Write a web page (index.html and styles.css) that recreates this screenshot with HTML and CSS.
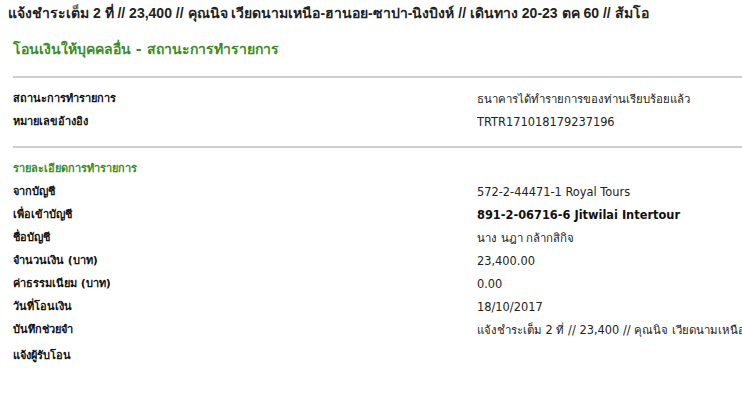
FILE: index.html
```html
<!DOCTYPE html>
<html lang="th">
<head>
<meta charset="utf-8">
<link rel="stylesheet" href="styles.css">
</head>
<body>
<h1 class="subject">แจ้งชำระเต็ม 2 ที่ // 23,400 // คุณนิจ เวียดนามเหนือ-ฮานอย-ซาปา-นิงบิงห์ // เดินทาง 20-23 ตค 60 // ส้มโอ</h1>
<div class="panel">
  <h2 class="title">โอนเงินให้บุคคลอื่น - สถานะการทำรายการ</h2>
  <div class="block">
    <div class="row"><span class="label">สถานะการทำรายการ</span><span class="value">ธนาคารได้ทำรายการของท่านเรียบร้อยแล้ว</span></div>
    <div class="row"><span class="label">หมายเลขอ้างอิง</span><span class="value">TRTR171018179237196</span></div>
  </div>
  <div class="block details">
    <div class="section">รายละเอียดการทำรายการ</div>
    <div class="row"><span class="label">จากบัญชี</span><span class="value">572-2-44471-1 Royal Tours</span></div>
    <div class="row"><span class="label">เพื่อเข้าบัญชี</span><span class="value strong">891-2-06716-6 Jitwilai Intertour</span></div>
    <div class="row"><span class="label">ชื่อบัญชี</span><span class="value">นาง นฎา กล้ากสิกิจ</span></div>
    <div class="row"><span class="label">จำนวนเงิน (บาท)</span><span class="value">23,400.00</span></div>
    <div class="row"><span class="label">ค่าธรรมเนียม (บาท)</span><span class="value">0.00</span></div>
    <div class="row"><span class="label">วันที่โอนเงิน</span><span class="value">18/10/2017</span></div>
    <div class="row"><span class="label">บันทึกช่วยจำ</span><span class="value clip">แจ้งชำระเต็ม 2 ที่ // 23,400 // คุณนิจ เวียดนามเหนือ-ฮานอย-ซาปา-นิงบิงห์ // เดินทาง 20-23 ตค 60 // ส้มโอ</span></div>
    <div class="row notify"><span class="label">แจ้งผู้รับโอน</span><span class="value"></span></div>
  </div>
</div>
</body>
</html>
```
FILE: styles.css
```css
html, body {
  margin: 0;
  padding: 0;
  background: #fff;
  overflow: hidden;
}
body {
  width: 742px;
  height: 406px;
  color: #1a1a1a;
}
.subject {
  margin: 0;
  padding: 5px 0 0 8px;
  font: bold 14px/17px "Liberation Sans", Arial, sans-serif;
  color: #222;
  white-space: nowrap;
}
.panel {
  padding: 19px 0 0 13px;
}
.title {
  margin: 0;
  font: bold 14px/17px Tahoma, "DejaVu Sans", sans-serif;
  color: #3a8e1e;
}
.block {
  margin-top: 18px;
  border-top: 2px solid #cfcfcf;
  padding-top: 9px;
  padding-bottom: 1px;
}
.details {
  margin-top: 12px;
  padding-top: 13px;
}
.section {
  font: bold 11px/16px Tahoma, "DejaVu Sans", sans-serif;
  color: #3a8e1e;
  margin-bottom: 3px;
}
.row {
  display: grid;
  grid-template-columns: 464px 1fr;
  height: 23px;
  align-items: center;
  white-space: nowrap;
}
.label {
  font: bold 11px/16px Tahoma, "DejaVu Sans", sans-serif;
  color: #111;
}
.value {
  font: 11.4px/16px Verdana, "DejaVu Sans", sans-serif;
  color: #222;
  overflow: hidden;
}
.value.strong {
  font-weight: bold;
  color: #111;
}
.notify {
  margin-top: 3px;
}
```
